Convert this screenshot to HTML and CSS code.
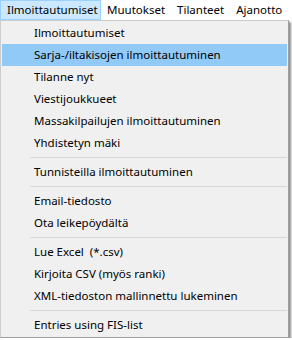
FILE: index.html
```html
<!DOCTYPE html>
<html lang="fi">
<head>
    <meta charset="UTF-8">
    <title>Ilmoittautumiset</title>
    <link rel="stylesheet" href="styles.css">
</head>
<body>
<nav class="menubar">
    <div class="menubar-item open">Ilmoittautumiset</div>
    <div class="menubar-item">Muutokset</div>
    <div class="menubar-item">Tilanteet</div>
    <div class="menubar-item">Ajanotto</div>
</nav>

<ul class="menu">
    <li>Ilmoittautumiset</li>
    <li class="hover">Sarja-/iltakisojen ilmoittautuminen</li>
    <li>Tilanne nyt</li>
    <li>Viestijoukkueet</li>
    <li>Massakilpailujen ilmoittautuminen</li>
    <li>Yhdistetyn mäki</li>
    <li class="sep"></li>
    <li>Tunnisteilla ilmoittautuminen</li>
    <li class="sep"></li>
    <li>Email-tiedosto</li>
    <li>Ota leikepöydältä</li>
    <li class="sep"></li>
    <li>Lue Excel&nbsp; (*.csv)</li>
    <li>Kirjoita CSV (myös ranki)</li>
    <li>XML-tiedoston mallinnettu lukeminen</li>
    <li class="sep"></li>
    <li>Entries using FIS-list</li>
</ul>
</body>
</html>
```

FILE: styles.css
```css
html, body {
    margin: 0;
    padding: 0;
    background: #fff;
    overflow: hidden;
}

body {
    font-family: "Noto Sans", "Open Sans", sans-serif;
    font-size: 11.5px;
    color: #000;
}

.menubar {
    display: flex;
    height: 20px;
    background: #fff;
}

.menubar-item {
    box-sizing: border-box;
    height: 20px;
    line-height: 18px;
    padding: 0 5px;
    border: 1px solid transparent;
    white-space: nowrap;
}

.menubar-item.open {
    background: #cce8ff;
    border-color: #99d1ff;
    padding: 0 7px 0 6px;
    width: 101px;
}

.menu {
    list-style: none;
    margin: 0;
    padding: 1px;
    width: 289px;
    background: #f0f0f0;
    border: 1px solid #cccccc;
    border-right-color: #a0a0a0;
    border-bottom-color: #a0a0a0;
    box-shadow: 2px 2px 2px rgba(0, 0, 0, 0.45);
    box-sizing: border-box;
}

.menu li {
    height: 22px;
    line-height: 22px;
    padding-left: 32px;
    white-space: nowrap;
}

.menu li.hover {
    background: #91c9f7;
}

.menu li.sep {
    height: 7px;
    padding: 0;
    margin-left: 28px;
    display: flex;
    align-items: center;
}

.menu li.sep::before {
    content: "";
    flex: 1;
    height: 1px;
    background: #d7d7d7;
}
```
